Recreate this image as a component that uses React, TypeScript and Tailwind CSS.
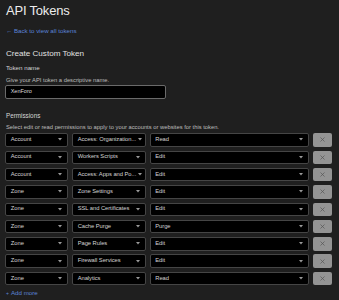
const rows = [
  { scope: 'Account', item: 'Access: Organization...', perm: 'Read' },
  { scope: 'Account', item: 'Workers Scripts', perm: 'Edit' },
  { scope: 'Account', item: 'Access: Apps and Po...', perm: 'Edit' },
  { scope: 'Zone', item: 'Zone Settings', perm: 'Edit' },
  { scope: 'Zone', item: 'SSL and Certificates', perm: 'Edit' },
  { scope: 'Zone', item: 'Cache Purge', perm: 'Purge' },
  { scope: 'Zone', item: 'Page Rules', perm: 'Edit' },
  { scope: 'Zone', item: 'Firewall Services', perm: 'Edit' },
  { scope: 'Zone', item: 'Analytics', perm: 'Read' },
];

function Caret() {
  return (
    <svg width="4" height="3" viewBox="0 0 4 3" className="shrink-0 text-[#9a9a9a]">
      <path d="M0 0h4L2 2.5z" fill="currentColor" />
    </svg>
  );
}

function Select({ value }: { value: string }) {
  return (
    <div className="flex h-[13.4px] items-center justify-between gap-[2px] rounded-[2px] border border-[#454545] bg-black pl-[4.5px] pr-[5px]">
      <span className="whitespace-nowrap text-[5.8px] leading-none tracking-[-0.05px] text-[#d4d4d4]">{value}</span>
      <Caret />
    </div>
  );
}

export default function App() {
  return (
    <div
      className="h-[300px] w-[339px] overflow-hidden bg-[#1f1f1f] pl-[5.3px] pr-[6.7px]"
      style={{ fontFamily: '"Liberation Sans", Arial, sans-serif' }}
    >
      <h1 className="pl-[0.7px] pt-[4px] text-[13px] leading-[13px] tracking-[-0.2px] text-[#ececec]">API Tokens</h1>
      <a className="mt-[9.7px] block pl-[0.7px] text-[6.2px] leading-[8px] text-[#5b84d8]">← Back to view all tokens</a>

      <h2 className="mt-[14.3px] pl-[0.7px] text-[8.1px] leading-[10px] text-[#e2e2e2]">Create Custom Token</h2>
      <p className="mt-[5.3px] pl-[0.7px] text-[6.2px] leading-[8px] text-[#d6d6d6]">Token name</p>
      <p className="mt-[3.7px] pl-[0.7px] text-[5.8px] leading-[8px] text-[#bdbdbd]">Give your API token a descriptive name.</p>
      <div className="mt-[1px] flex h-[14px] w-[160.4px] items-center rounded-[2px] border border-[#6a6a6a] bg-black pl-[4.4px]">
        <span className="text-[5.5px] leading-none text-[#dedede]">XenForo</span>
      </div>

      <p className="mt-[13px] pl-[0.7px] text-[6.3px] leading-[8px] text-[#d6d6d6]">Permissions</p>
      <p className="mt-[2.7px] pl-[0.7px] text-[5.8px] leading-[8px] text-[#bdbdbd]">
        Select edit or read permissions to apply to your accounts or websites for this token.
      </p>

      <div className="mt-[2.6px] grid grid-cols-[63px_73.7px_1fr_19px] gap-x-[3.9px] gap-y-[3.93px]">
        {rows.map((r, i) => (
          <div key={i} className="contents">
            <Select value={r.scope} />
            <Select value={r.item} />
            <Select value={r.perm} />
            <button className="flex h-[13.4px] items-center justify-center rounded-[2px] bg-[#949494]">
              <svg width="5" height="5" viewBox="0 0 5 5" stroke="#555" strokeWidth="0.7">
                <path d="M0.5 0.5l4 4M4.5 0.5l-4 4" />
              </svg>
            </button>
          </div>
        ))}
      </div>

      <a className="mt-[3.7px] flex items-center gap-[2px] pl-[0.7px] text-[6.2px] leading-[8px] text-[#5b84d8]">
        <span className="text-[5px]">+</span>
        Add more
      </a>
    </div>
  );
}
